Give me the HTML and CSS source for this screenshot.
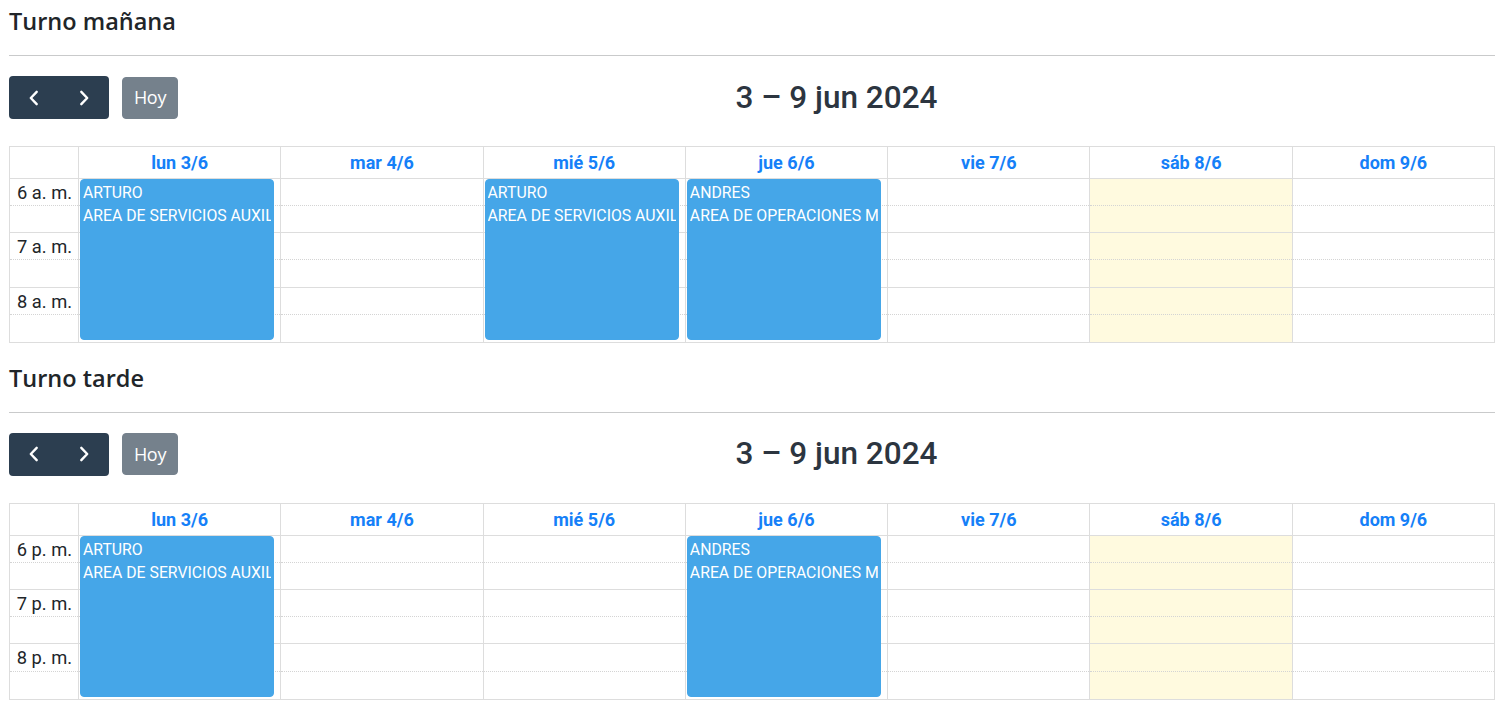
FILE: index.html
```html
<!DOCTYPE html>
<html lang="es">
<head>
<meta charset="utf-8">
<title>Turnos</title>
<link rel="stylesheet" href="styles.css">
</head>
<body>
<div class="page">
  <section class="shift">
    <h4 class="shift-title">Turno mañana</h4>
    <hr class="rule">
    <div class="toolbar">
      <div class="chunk">
        <div class="btn-group">
          <button class="btn icon" aria-label="prev"><svg width="12" height="16" viewBox="0 0 12 16"><path d="M8.7 1.8 L2.8 8 L8.7 14.2" fill="none" stroke="#fff" stroke-width="2.4" stroke-linecap="round" stroke-linejoin="round"/></svg></button>
          <button class="btn icon" aria-label="next"><svg width="12" height="16" viewBox="0 0 12 16"><path d="M3.3 1.8 L9.2 8 L3.3 14.2" fill="none" stroke="#fff" stroke-width="2.4" stroke-linecap="round" stroke-linejoin="round"/></svg></button>
        </div>
        <button class="btn today" disabled>Hoy</button>
      </div>
      <h2 class="range">3 – 9 jun 2024</h2>
      <div class="chunk"></div>
    </div>
    <div class="cal">
      <div class="hcell axis"></div>
      <div class="hcell">lun 3/6</div>
      <div class="hcell">mar 4/6</div>
      <div class="hcell">mié 5/6</div>
      <div class="hcell">jue 6/6</div>
      <div class="hcell">vie 7/6</div>
      <div class="hcell">sáb 8/6</div>
      <div class="hcell">dom 9/6</div>

      <div class="col axis">
        <div class="slot hour"><span class="label">6 a. m.</span></div>
        <div class="slot half"></div>
        <div class="slot hour"><span class="label">7 a. m.</span></div>
        <div class="slot half"></div>
        <div class="slot hour"><span class="label">8 a. m.</span></div>
        <div class="slot half last"></div>
      </div>
      <div class="col day">
        <div class="slot hour"></div><div class="slot half"></div><div class="slot hour"></div><div class="slot half"></div><div class="slot hour"></div><div class="slot half last"></div>
        <div class="event"><div class="ev-line">ARTURO</div><div class="ev-line">AREA DE SERVICIOS AUXILIARES</div></div>
      </div>
      <div class="col day">
        <div class="slot hour"></div><div class="slot half"></div><div class="slot hour"></div><div class="slot half"></div><div class="slot hour"></div><div class="slot half last"></div>
      </div>
      <div class="col day">
        <div class="slot hour"></div><div class="slot half"></div><div class="slot hour"></div><div class="slot half"></div><div class="slot hour"></div><div class="slot half last"></div>
        <div class="event"><div class="ev-line">ARTURO</div><div class="ev-line">AREA DE SERVICIOS AUXILIARES</div></div>
      </div>
      <div class="col day">
        <div class="slot hour"></div><div class="slot half"></div><div class="slot hour"></div><div class="slot half"></div><div class="slot hour"></div><div class="slot half last"></div>
        <div class="event"><div class="ev-line">ANDRES</div><div class="ev-line">AREA DE OPERACIONES MANTENIMIENTO</div></div>
      </div>
      <div class="col day">
        <div class="slot hour"></div><div class="slot half"></div><div class="slot hour"></div><div class="slot half"></div><div class="slot hour"></div><div class="slot half last"></div>
      </div>
      <div class="col day today-col">
        <div class="slot hour"></div><div class="slot half"></div><div class="slot hour"></div><div class="slot half"></div><div class="slot hour"></div><div class="slot half last"></div>
      </div>
      <div class="col day">
        <div class="slot hour"></div><div class="slot half"></div><div class="slot hour"></div><div class="slot half"></div><div class="slot hour"></div><div class="slot half last"></div>
      </div>
    </div>
  </section>

  <section class="shift second">
    <h4 class="shift-title">Turno tarde</h4>
    <hr class="rule">
    <div class="toolbar">
      <div class="chunk">
        <div class="btn-group">
          <button class="btn icon" aria-label="prev"><svg width="12" height="16" viewBox="0 0 12 16"><path d="M8.7 1.8 L2.8 8 L8.7 14.2" fill="none" stroke="#fff" stroke-width="2.4" stroke-linecap="round" stroke-linejoin="round"/></svg></button>
          <button class="btn icon" aria-label="next"><svg width="12" height="16" viewBox="0 0 12 16"><path d="M3.3 1.8 L9.2 8 L3.3 14.2" fill="none" stroke="#fff" stroke-width="2.4" stroke-linecap="round" stroke-linejoin="round"/></svg></button>
        </div>
        <button class="btn today" disabled>Hoy</button>
      </div>
      <h2 class="range">3 – 9 jun 2024</h2>
      <div class="chunk"></div>
    </div>
    <div class="cal">
      <div class="hcell axis"></div>
      <div class="hcell">lun 3/6</div>
      <div class="hcell">mar 4/6</div>
      <div class="hcell">mié 5/6</div>
      <div class="hcell">jue 6/6</div>
      <div class="hcell">vie 7/6</div>
      <div class="hcell">sáb 8/6</div>
      <div class="hcell">dom 9/6</div>

      <div class="col axis">
        <div class="slot hour"><span class="label">6 p. m.</span></div>
        <div class="slot half"></div>
        <div class="slot hour"><span class="label">7 p. m.</span></div>
        <div class="slot half"></div>
        <div class="slot hour"><span class="label">8 p. m.</span></div>
        <div class="slot half last"></div>
      </div>
      <div class="col day">
        <div class="slot hour"></div><div class="slot half"></div><div class="slot hour"></div><div class="slot half"></div><div class="slot hour"></div><div class="slot half last"></div>
        <div class="event"><div class="ev-line">ARTURO</div><div class="ev-line">AREA DE SERVICIOS AUXILIARES</div></div>
      </div>
      <div class="col day">
        <div class="slot hour"></div><div class="slot half"></div><div class="slot hour"></div><div class="slot half"></div><div class="slot hour"></div><div class="slot half last"></div>
      </div>
      <div class="col day">
        <div class="slot hour"></div><div class="slot half"></div><div class="slot hour"></div><div class="slot half"></div><div class="slot hour"></div><div class="slot half last"></div>
      </div>
      <div class="col day">
        <div class="slot hour"></div><div class="slot half"></div><div class="slot hour"></div><div class="slot half"></div><div class="slot hour"></div><div class="slot half last"></div>
        <div class="event"><div class="ev-line">ANDRES</div><div class="ev-line">AREA DE OPERACIONES MANTENIMIENTO</div></div>
      </div>
      <div class="col day">
        <div class="slot hour"></div><div class="slot half"></div><div class="slot hour"></div><div class="slot half"></div><div class="slot hour"></div><div class="slot half last"></div>
      </div>
      <div class="col day today-col">
        <div class="slot hour"></div><div class="slot half"></div><div class="slot hour"></div><div class="slot half"></div><div class="slot hour"></div><div class="slot half last"></div>
      </div>
      <div class="col day">
        <div class="slot hour"></div><div class="slot half"></div><div class="slot hour"></div><div class="slot half"></div><div class="slot hour"></div><div class="slot half last"></div>
      </div>
    </div>
  </section>
</div>
</body>
</html>
```

FILE: styles.css
```css
* { box-sizing: border-box; }

body {
  margin: 0;
  background: #fff;
  color: #212529;
  font-family: Roboto, "Liberation Sans", Arial, sans-serif;
  font-size: 18px;
  line-height: 1.5;
}

.page {
  padding: 0 10px 0 9px;
}

.shift {
  padding-top: 7px;
}

.shift.second {
  margin-top: 14px;
}

.shift-title {
  margin: 0;
  font-family: "Open Sans", "Noto Sans", sans-serif;
  font-size: 23.5px;
  font-weight: 600;
  line-height: 29px;
  color: #212529;
}

.rule {
  margin: 19px 0 20px;
  border: 0;
  border-top: 1px solid #c9cacb;
  height: 0;
}

.toolbar {
  display: flex;
  justify-content: space-between;
  align-items: center;
  margin-bottom: 27px;
}

.chunk {
  display: flex;
  align-items: center;
}

.btn-group {
  display: flex;
  background: #2c3e50;
  border-radius: 4px;
}

.btn {
  border: 1px solid #2c3e50;
  background: #2c3e50;
  color: #fff;
  font-family: "Open Sans", "Noto Sans", sans-serif;
  font-size: 18px;
  line-height: 27px;
  border-radius: 4px;
  padding: 0;
  display: flex;
  align-items: center;
  justify-content: center;
}

.btn.icon {
  width: 50px;
  height: 43px;
  border-radius: 0;
  background: transparent;
  border-color: transparent;
}

.btn.today {
  margin-left: 13px;
  width: 56px;
  height: 42px;
  opacity: 0.65;
  letter-spacing: -0.3px;
}

.range {
  margin: 0;
  font-family: Roboto, sans-serif;
  font-size: 31.5px;
  font-weight: 500;
  line-height: 1.2;
  color: #2c3540;
}

.cal {
  display: grid;
  grid-template-columns: 68px repeat(7, 1fr);
  border: 1px solid #ddd;
}

.hcell {
  height: 32px;
  border-left: 1px solid #ddd;
  border-bottom: 1px solid #ddd;
  text-align: center;
  font-weight: 700;
  font-size: 18px;
  line-height: 31px;
  color: #1580f8;
}

.hcell.axis {
  border-left: 0;
}

.col {
  position: relative;
}

.col.day {
  border-left: 1px solid #ddd;
}

.col.today-col {
  background: rgba(255, 220, 40, 0.15);
}

.slot {
  height: 27.15px;
}

.slot.hour {
  border-bottom: 1px dotted #d4d4d4;
}

.slot.half {
  border-bottom: 1px solid #ddd;
}

.slot.last {
  border-bottom: 0;
}

.axis .slot {
  text-align: right;
  padding-right: 6px;
}

.label {
  font-size: 18.3px;
  line-height: 26px;
  color: #212529;
}

.event {
  position: absolute;
  top: 0;
  left: 1px;
  right: 6px;
  bottom: 2px;
  background: #45a6e8;
  border: 1px solid #45a6e8;
  border-radius: 4px;
  padding: 1px 2px;
  overflow: hidden;
  color: #fff;
  font-size: 15.8px;
  line-height: 23px;
}

.ev-line {
  white-space: nowrap;
  overflow: hidden;
}
```
